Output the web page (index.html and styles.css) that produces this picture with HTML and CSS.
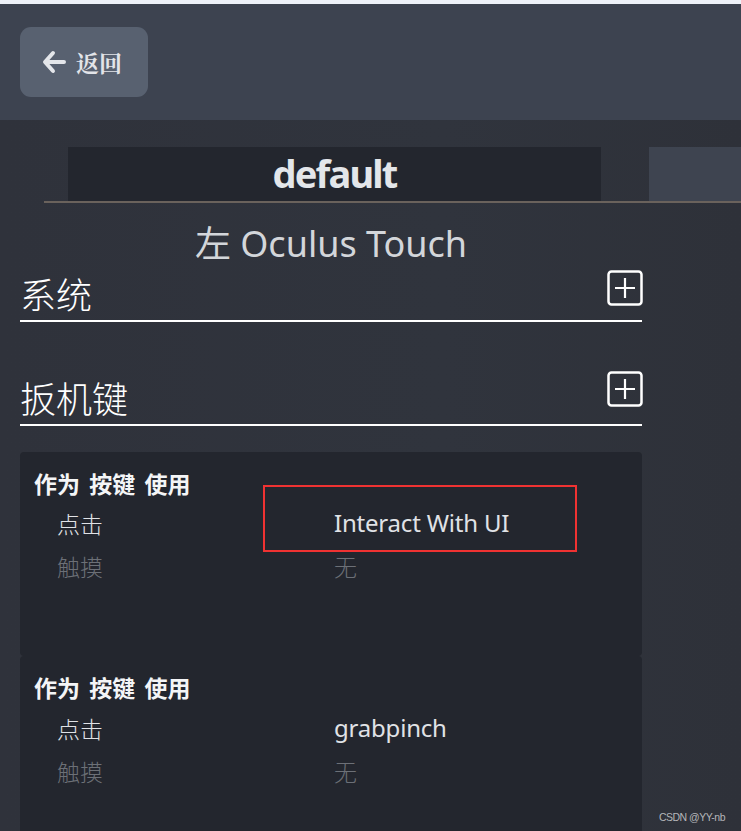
FILE: index.html
```
<!DOCTYPE html>
<html lang="zh">
<head>
<meta charset="utf-8">
<link rel="stylesheet" href="styles.css">
</head>
<body>
<div class="topstrip"></div>
<header class="header">
  <button class="back">
    <svg class="back-icon" width="24" height="24" viewBox="0 0 24 24"><path d="M11 3 L3 12 L11 21 M3.5 12 H22" fill="none" stroke="#e4e6ea" stroke-width="4" stroke-linecap="round" stroke-linejoin="round"/></svg>
    <span class="back-label">返回</span>
  </button>
</header>
<main class="main">
  <div class="tabs">
    <div class="tab active">default</div>
    <div class="tab other"></div>
  </div>
  <div class="tabline"></div>
  <div class="column">
    <div class="ctrl-title">左 Oculus Touch</div>
    <div class="section first">
      <span class="section-name">系统</span>
      <svg class="plus" width="36" height="36" viewBox="0 0 36 36"><rect x="1.5" y="1.5" width="33" height="33" rx="3" fill="none" stroke="#fff" stroke-width="2.5"/><path d="M18 8 V28 M8 18 H28" stroke="#fff" stroke-width="2.2"/></svg>
    </div>
    <div class="section second">
      <span class="section-name">扳机键</span>
      <svg class="plus" width="36" height="36" viewBox="0 0 36 36"><rect x="1.5" y="1.5" width="33" height="33" rx="3" fill="none" stroke="#fff" stroke-width="2.5"/><path d="M18 8 V28 M8 18 H28" stroke="#fff" stroke-width="2.2"/></svg>
    </div>
    <div class="card card1">
      <div class="card-title">作为 按键 使用</div>
      <div class="row"><span class="key">点击</span><span class="val">Interact With UI</span></div>
      <div class="row dim"><span class="key">触摸</span><span class="val">无</span></div>
      <div class="highlight"></div>
    </div>
    <div class="card card2">
      <div class="card-title">作为 按键 使用</div>
      <div class="row"><span class="key">点击</span><span class="val">grabpinch</span></div>
      <div class="row dim"><span class="key">触摸</span><span class="val">无</span></div>
    </div>
  </div>
  <div class="watermark">CSDN @YY-nb</div>
</main>
</body>
</html>
```
FILE: styles.css
```
html, body { margin: 0; padding: 0; }
body {
  width: 741px;
  height: 831px;
  overflow: hidden;
  background: #2f323b;
  font-family: "Noto Sans", "Noto Sans CJK SC", sans-serif;
  color: #e6e8ec;
}
.topstrip { height: 4px; background: #eef2f9; }
.header {
  height: 116px;
  background: #3d4350;
  padding: 23px 0 0 20px;
  box-sizing: border-box;
}
.back {
  width: 128px;
  height: 70px;
  border: none;
  border-radius: 11px;
  background: #586170;
  display: flex;
  align-items: center;
  padding: 0 0 0 22px;
  gap: 10px;
  cursor: pointer;
}
.back-icon { display: block; margin-top: 0; }
.back-label {
  font-family: "Noto Serif CJK SC", "Noto Sans CJK SC", serif;
  font-weight: 700;
  font-size: 23px;
  color: #e2e4e8;
}
.main {
  position: relative;
  height: 711px;
  background: linear-gradient(90deg, #2f323b 0%, #30343d 60%, #2e3139 100%);
  padding-top: 27px;
  box-sizing: border-box;
}
.tabs { display: flex; gap: 48px; margin-left: 68px; height: 54px; }
.tab { height: 54px; }
.tab.active {
  width: 533px;
  background: #23262e;
  color: #e3e6ea;
  font-weight: 700;
  font-size: 38px;
  line-height: 52px;
  text-align: center;
  letter-spacing: -1.8px;
}
.tab.other { flex: 1; background: #3e4450; }
.tabline { height: 2px; margin-left: 44px; background: #6a625c; }
.column { margin: 0 99px 0 20px; }
.ctrl-title {
  text-align: center;
  font-size: 36px;
  color: #d3d6da;
  height: 65px;
  line-height: 82px;
  font-weight: 400;
}
.section {
  display: flex;
  justify-content: space-between;
  align-items: flex-end;
  border-bottom: 2px solid #ffffff;
}
.section.first { height: 52px; }
.section.second { height: 54px; margin-top: 48px; }
.section-name {
  font-family: "Noto Sans CJK SC", sans-serif;
  font-size: 36px;
  font-weight: 300;
  color: #ffffff;
  line-height: 36px;
  padding-bottom: 9px;
}
.plus { display: block; align-self: flex-start; margin-top: 2px; margin-right: -1px; }
.second .plus { margin-top: 1px; }
.card {
  position: relative;
  background: #23262e;
  border-radius: 4px;
  padding: 17px 14px 0 14px;
  box-sizing: border-box;
}
.card1 { margin-top: 26px; height: 204px; }
.card2 { height: 180px; padding-top: 17px; }
.card-title {
  font-family: "Noto Sans CJK SC", sans-serif;
  font-weight: 700;
  font-size: 23px;
  line-height: 28px;
  color: #f4f5f7;
  word-spacing: 4px;
}
.row {
  display: flex;
  padding-left: 23px;
  height: 43px;
  align-items: center;
  font-size: 24px;
  color: #e0e2e6;
}
.card-title + .row { margin-top: 4px; }
.card2 .card-title + .row { margin-top: 5px; }
.row .key { width: 277px; font-family: "Noto Sans CJK SC", sans-serif; font-weight: 300; font-size: 23px; }
.row .val { font-family: "Noto Sans", "Noto Sans CJK SC", sans-serif; letter-spacing: -0.2px; }
.row.dim { color: #6c7077; }
.row.dim .val { font-family: "Noto Sans CJK SC", sans-serif; font-weight: 300; font-size: 23px; }
.highlight {
  position: absolute;
  left: 243px;
  top: 33px;
  width: 314px;
  height: 67px;
  border: 2px solid #f03232;
  box-sizing: border-box;
}
.watermark {
  position: absolute;
  right: 16px;
  bottom: 8px;
  font-family: "Liberation Sans", sans-serif;
  font-size: 10.5px;
  color: #b4b6b9;
  letter-spacing: -0.5px;
}
```
